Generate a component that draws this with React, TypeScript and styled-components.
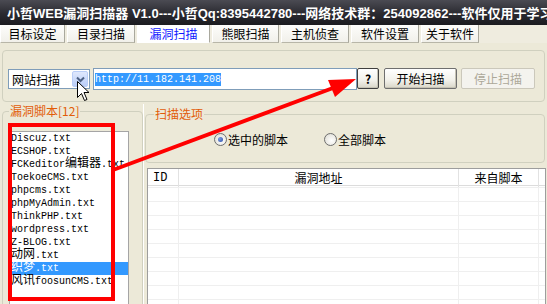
import React from "react";
import styled, { createGlobalStyle } from "styled-components";

const Global = createGlobalStyle`
  html, body { margin: 0; padding: 0; background: #ece9d8; }
  body { font-family: "Noto Sans CJK SC", "Liberation Sans", sans-serif; }
`;

const UI = `"Noto Sans CJK SC", "Liberation Sans", sans-serif`;
const MONO = `"Liberation Mono", "Noto Sans CJK SC", monospace`;

const Window = styled.div`
  position: relative;
  width: 547px;
  height: 304px;
  overflow: hidden;
  background: #ece9d8;
  display: flex;
  flex-direction: column;
  font-family: ${UI};
  font-size: 12px;
  color: #000;
`;

const TitleBar = styled.div`
  flex: none;
  height: 25px;
  display: flex;
  align-items: center;
  gap: 4px;
  padding-left: 3px;
  background: linear-gradient(#4b4b53, #2a2a30 55%, #1b1b20);
  color: #fff;
  font: bold 13px "Liberation Sans", "Noto Sans CJK SC", sans-serif;
  white-space: nowrap;
  overflow: hidden;
`;

const TitleText = styled.span`
  flex: none;
`;

const TabStrip = styled.div`
  flex: none;
  height: 18px;
  display: flex;
  align-items: stretch;
  gap: 2px;
  background: #efecdf;
`;

const Tab = styled.div<{ $w: number; $active?: boolean }>`
  width: ${(p) => p.$w}px;
  box-sizing: border-box;
  display: flex;
  align-items: center;
  justify-content: center;
  background: ${(p) => (p.$active ? "#ffffff" : "linear-gradient(#fdfdfb, #f1f0ea)")};
  border-left: 1px solid #ffffff;
  border-right: 1px solid #a9a89d;
  border-bottom: 1px solid ${(p) => (p.$active ? "#ffffff" : "#b8b6a8")};
  color: ${(p) => (p.$active ? "#1018ff" : "#000")};
  font-size: 12px;
  line-height: 1;
`;

const TopGroup = styled.div`
  flex: none;
  margin: 7px 2px 0;
  height: 52px;
  box-sizing: border-box;
  border: 1px solid #d0d0bf;
  border-radius: 4px;
  display: flex;
  align-items: flex-start;
  padding: 17px 0 0 5px;
`;

const Combo = styled.div`
  margin-top: 1px;
  width: 82px;
  height: 20px;
  box-sizing: border-box;
  border: 1px solid #7f9db9;
  background: #fff;
  display: flex;
  align-items: center;
  justify-content: space-between;
  padding: 0 1px 0 3px;
  font-size: 12px;
`;

const ComboButton = styled.div`
  width: 16px;
  height: 16px;
  box-sizing: border-box;
  border: 1px solid #b9cdf7;
  border-radius: 2px;
  background: linear-gradient(#dfe8fd, #b9cdf8);
  display: flex;
  align-items: center;
  justify-content: center;
`;

const UrlInput = styled.div`
  margin-left: 3px;
  width: 264px;
  height: 22px;
  box-sizing: border-box;
  border: 1px solid #7f9db9;
  background: #fff;
  display: flex;
  align-items: center;
  padding-left: 1px;
`;

const Selected = styled.span`
  background: #3399ff;
  color: #fff;
  font: 10px/13px ${MONO};
`;

const Button = styled.div<{ $w: number; $disabled?: boolean; $focus?: boolean; $ml: number }>`
  margin-left: ${(p) => p.$ml}px;
  width: ${(p) => p.$w}px;
  height: 21px;
  box-sizing: border-box;
  border: 1px solid ${(p) => (p.$disabled ? "#cbc8bb" : p.$focus ? "#404040" : "#6f6f6f")};
  border-radius: 2px;
  background: ${(p) =>
    p.$disabled ? "#f4f3ee" : "linear-gradient(#ffffff, #f2f1ea 60%, #d9d6c8)"};
  box-shadow: ${(p) => (p.$disabled ? "none" : "inset -1px -1px 0 #c6c3b4")};
  display: flex;
  align-items: center;
  justify-content: center;
  color: ${(p) => (p.$disabled ? "#aca899" : "#000")};
  font-size: 12px;
  font-weight: ${(p) => (p.$focus ? "bold" : "normal")};
`;

const Bottom = styled.div`
  flex: 1;
  min-height: 0;
  display: flex;
  margin-top: 2px;
`;

const Group = styled.fieldset`
  margin: 0;
  padding: 0;
  min-width: 0;
  border: 1px solid #d0d0bf;
  border-radius: 4px;
  box-sizing: border-box;
`;

const Legend = styled.legend<{ $ml: number }>`
  margin-left: ${(p) => p.$ml}px;
  padding: 0 1px;
  color: #e25c08;
  font-size: 12px;
  line-height: 14px;
`;

const LeftGroup = styled(Group)`
  margin-left: 2px;
  width: 141px;
  height: 230px;
`;

const ListBox = styled.div`
  margin: 13px 0 0 6px;
  width: 120px;
  height: 200px;
  box-sizing: border-box;
  border: 1px solid #a5a5a5;
  background: #fff;
`;

const Item = styled.div<{ $sel?: boolean }>`
  height: 13px;
  padding-left: 1px;
  font: 10px/13px ${MONO};
  white-space: nowrap;
  background: ${(p) => (p.$sel ? "#3399ff" : "transparent")};
  color: ${(p) => (p.$sel ? "#fff" : "#000")};
`;

const Cjk = styled.span`
  font-family: "Noto Sans CJK SC", sans-serif;
  font-size: 12px;
  line-height: 0;
`;

const Splitter = styled.div`
  width: 2px;
  flex: none;
  border-left: 1px solid #ffffff;
  box-sizing: border-box;
`;

const RightPane = styled.div`
  flex: 1;
  min-width: 0;
  display: flex;
  flex-direction: column;
`;

const OptionGroup = styled(Group)`
  margin: 3px 2px 0 0;
  height: 56px;
  flex: none;
`;

const RadioRow = styled.div`
  margin-top: 10px;
  height: 17px;
  display: flex;
  align-items: center;
  padding-left: 68px;
  gap: 36px;
`;

const RadioLabel = styled.label`
  display: flex;
  align-items: center;
  gap: 1px;
  font-size: 12px;
`;

const RadioDot = styled.span<{ $on?: boolean }>`
  width: 13px;
  height: 13px;
  box-sizing: border-box;
  border-radius: 50%;
  border: 1px solid #6e6e6e;
  background: radial-gradient(circle at 60% 60%, #ffffff, #e6e5de 70%, #cfcdc3);
  display: flex;
  align-items: center;
  justify-content: center;
  &::after {
    content: "";
    display: ${(p) => (p.$on ? "block" : "none")};
    width: 5px;
    height: 5px;
    border-radius: 50%;
    background: radial-gradient(circle at 35% 35%, #7d9be0, #2a4ea8);
  }
`;

const Table = styled.div`
  margin: 5px 1px 0 2px;
  flex: 1;
  border: 1px solid #9d9d9d;
  border-bottom: none;
  background: #fff;
  display: flex;
  flex-direction: column;
`;

const Cols = `30px 280px 80px 1fr`;

const HeaderRow = styled.div`
  display: grid;
  grid-template-columns: ${Cols};
  height: 16px;
  border-bottom: 1px solid #dcdcdc;
  margin-bottom: 1px;
`;

const HeadCell = styled.div<{ $left?: boolean }>`
  display: flex;
  align-items: center;
  justify-content: ${(p) => (p.$left ? "flex-start" : "center")};
  padding-left: ${(p) => (p.$left ? "5px" : "0")};
  border-left: 1px solid #e2e2e2;
  &:first-child { border-left: none; }
  font-size: 12px;
  font-family: ${MONO};
`;

const Row = styled.div`
  display: grid;
  grid-template-columns: ${Cols};
  height: 13px;
  border-top: 1px solid #efefef;
`;

const Cell = styled.div`
  border-left: 1px solid #efefef;
  &:first-child { border-left: none; }
`;

const Overlay = styled.svg`
  position: absolute;
  left: 0;
  top: 0;
  pointer-events: none;
`;

const tabs: { label: string; w: number; active?: boolean }[] = [
  { label: "目标设定", w: 65 },
  { label: "目录扫描", w: 68 },
  { label: "漏洞扫描", w: 73, active: true },
  { label: "熊眼扫描", w: 67 },
  { label: "主机侦查", w: 68 },
  { label: "软件设置", w: 68 },
  { label: "关于软件", w: 58 },
];

const scripts = [
  "Discuz.txt",
  "ECSHOP.txt",
  "FCKeditor编辑器.txt",
  "ToekoeCMS.txt",
  "phpcms.txt",
  "phpMyAdmin.txt",
  "ThinkPHP.txt",
  "wordpress.txt",
  "Z-BLOG.txt",
  "动网.txt",
  "织梦.txt",
  "风讯foosunCMS.txt",
];

function renderName(name: string) {
  return name
    .split(/([\u4e00-\u9fff]+)/)
    .filter((part) => part.length > 0)
    .map((part, i) =>
      /[\u4e00-\u9fff]/.test(part) ? (
        <Cjk key={i}>{part}</Cjk>
      ) : (
        <React.Fragment key={i}>{part}</React.Fragment>
      )
    );
}

const AppIcon = () => (
  <svg width="14" height="14" viewBox="0 0 14 14">
    <path d="M7 1.5 A5.5 5.5 0 0 1 12.5 7" stroke="#3a8fd8" strokeWidth="2.2" fill="none" />
    <path d="M12.5 7 A5.5 5.5 0 0 1 7 12.5" stroke="#7a6fd0" strokeWidth="2.2" fill="none" />
    <path d="M7 12.5 A5.5 5.5 0 0 1 1.5 7" stroke="#3fb04a" strokeWidth="2.2" fill="none" />
    <path d="M1.5 7 A5.5 5.5 0 0 1 7 1.5" stroke="#e2582a" strokeWidth="2.2" fill="none" />
    <circle cx="7" cy="7" r="1.6" fill="#e0a030" />
  </svg>
);

export default function App() {
  return (
    <>
      <Global />
      <Window>
        <TitleBar>
          <AppIcon />
          <TitleText>小哲WEB漏洞扫描器 V1.0---小哲Qq:8395442780---网络技术群：254092862---软件仅用于学习交流</TitleText>
        </TitleBar>
        <TabStrip>
          {tabs.map((t) => (
            <Tab key={t.label} $w={t.w} $active={t.active}>
              {t.label}
            </Tab>
          ))}
        </TabStrip>
        <TopGroup>
          <Combo>
            <span>网站扫描</span>
            <ComboButton>
              <svg width="9" height="7" viewBox="0 0 9 7">
                <path d="M1 1.5 L4.5 5 L8 1.5" stroke="#4d6185" strokeWidth="2" fill="none" />
              </svg>
            </ComboButton>
          </Combo>
          <UrlInput>
            <Selected>http://11.182.141.208</Selected>
          </UrlInput>
          <Button $w={22} $ml={0} $focus>
            ?
          </Button>
          <Button $w={73} $ml={5}>
            开始扫描
          </Button>
          <Button $w={74} $ml={4} $disabled>
            停止扫描
          </Button>
        </TopGroup>
        <Bottom>
          <LeftGroup>
            <Legend $ml={6}>漏洞脚本[12]</Legend>
            <ListBox>
              {scripts.map((s) => (
                <Item key={s} $sel={s === "织梦.txt"}>
                  {renderName(s)}
                </Item>
              ))}
            </ListBox>
          </LeftGroup>
          <Splitter />
          <RightPane>
            <OptionGroup>
              <Legend $ml={8}>扫描选项</Legend>
              <RadioRow>
                <RadioLabel>
                  <RadioDot $on />
                  选中的脚本
                </RadioLabel>
                <RadioLabel>
                  <RadioDot />
                  全部脚本
                </RadioLabel>
              </RadioRow>
            </OptionGroup>
            <Table>
              <HeaderRow>
                <HeadCell $left>ID</HeadCell>
                <HeadCell>漏洞地址</HeadCell>
                <HeadCell>来自脚本</HeadCell>
                <HeadCell />
              </HeaderRow>
              {Array.from({ length: 10 }).map((_, i) => (
                <Row key={i}>
                  <Cell />
                  <Cell />
                  <Cell />
                  <Cell />
                </Row>
              ))}
            </Table>
          </RightPane>
        </Bottom>
        <Overlay width="547" height="304" viewBox="0 0 547 304">
          <rect x="10" y="125" width="103" height="174" fill="none" stroke="#ff0000" strokeWidth="4" />
          <line x1="113" y1="170" x2="333" y2="88" stroke="#ff0000" strokeWidth="4" />
          <polygon points="356,79 328,80 335,97" fill="#ff0000" />
          <path
            d="M77.5 81.5 L77.5 97.5 L81.5 93.5 L84.5 100.5 L87 99.5 L84 92.5 L89 92.5 Z"
            fill="#fff"
            stroke="#000"
            strokeWidth="1"
          />
        </Overlay>
      </Window>
    </>
  );
}
